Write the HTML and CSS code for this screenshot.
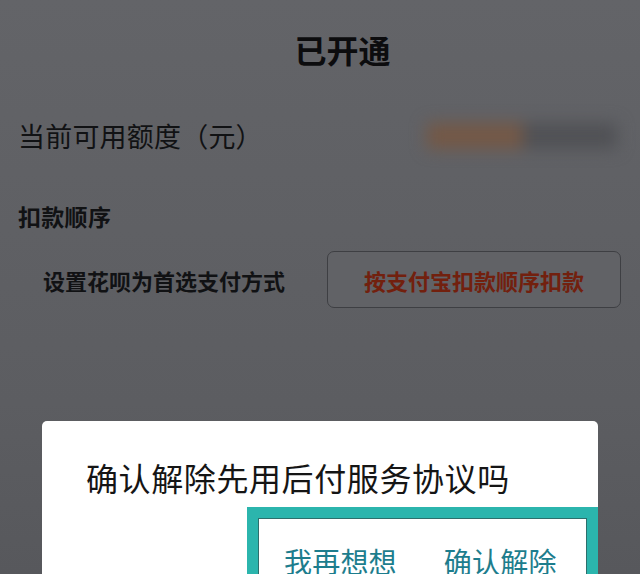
FILE: index.html
```html
<!DOCTYPE html>
<html lang="zh-CN">
<head>
<meta charset="utf-8">
<title>已开通</title>
<link rel="stylesheet" href="styles.css">
</head>
<body>
<div class="screen">
  <h1 class="title">已开通</h1>
  <div class="quota">
    <span class="quota-label">当前可用额度（元）</span>
    <span class="amount"><span class="amount-a"></span><span class="amount-b"></span></span>
  </div>
  <div class="section-title">扣款顺序</div>
  <div class="options">
    <div class="option">设置花呗为首选支付方式</div>
    <div class="option option-selected">按支付宝扣款顺序扣款</div>
  </div>

  <div class="dialog">
    <p class="dialog-msg">确认解除先用后付服务协议吗</p>
    <div class="dialog-actions">
      <span class="action">我再想想</span>
      <span class="action">确认解除</span>
    </div>
  </div>
</div>
</body>
</html>
```

FILE: styles.css
```css
html, body {
  margin: 0;
  padding: 0;
}
body {
  background: #5f6064;
  font-family: "Noto Sans CJK SC", "Noto Sans", sans-serif;
  color: #111214;
}
.screen {
  position: relative;
  height: 574px;
  overflow: hidden;
  padding: 0 19px 0 18px;
  background: linear-gradient(#636468, #5c5d61 70%, #57585c);
}
.title {
  margin: 0;
  padding-top: 33px;
  padding-left: 46px;
  text-align: center;
  font-size: 32px;
  line-height: 32px;
  font-weight: 700;
  color: #0c0c0e;
}
.quota {
  margin-top: 54px;
  display: flex;
  align-items: center;
  justify-content: space-between;
  height: 34px;
}
.quota-label {
  font-size: 27px;
  line-height: 34px;
  letter-spacing: 0.2px;
}
.amount {
  display: flex;
  width: 190px;
  height: 26px;
  margin-right: 4px;
  filter: blur(8px);
}
.amount-a {
  width: 96px;
  background: #745846;
}
.amount-b {
  flex: 1;
  background: #505155;
}
.section-title {
  margin-top: 52px;
  font-size: 23px;
  line-height: 23px;
  font-weight: 700;
  letter-spacing: 0.3px;
}
.options {
  margin-top: 23px;
  display: grid;
  grid-template-columns: 292px 294px;
  gap: 17px;
  height: 57px;
}
.option {
  display: flex;
  align-items: center;
  justify-content: center;
  font-size: 22px;
  font-weight: 700;
  border-radius: 7px;
  color: #111214;
}
.option-selected {
  border: 1px solid #3e3f43;
  background: #616266;
  color: #72200e;
}
.dialog {
  position: absolute;
  left: 42px;
  top: 421px;
  width: 556px;
  height: 200px;
  background: #ffffff;
  border-radius: 5px;
}
.dialog-msg {
  margin: 0;
  padding: 40px 0 0 44px;
  font-size: 32px;
  line-height: 32px;
  letter-spacing: 0.6px;
  color: #151515;
}
.dialog-actions {
  margin: 14px 0 0 205px;
  border: 11px solid #2bb5ad;
  box-shadow: inset 0 0 0 1px #2d6f6c;
  display: flex;
  gap: 47px;
  padding: 29px 0 0 26px;
  height: 80px;
}
.action {
  font-size: 28px;
  line-height: 28px;
  letter-spacing: 0.2px;
  color: #1d7d8d;
}
```
